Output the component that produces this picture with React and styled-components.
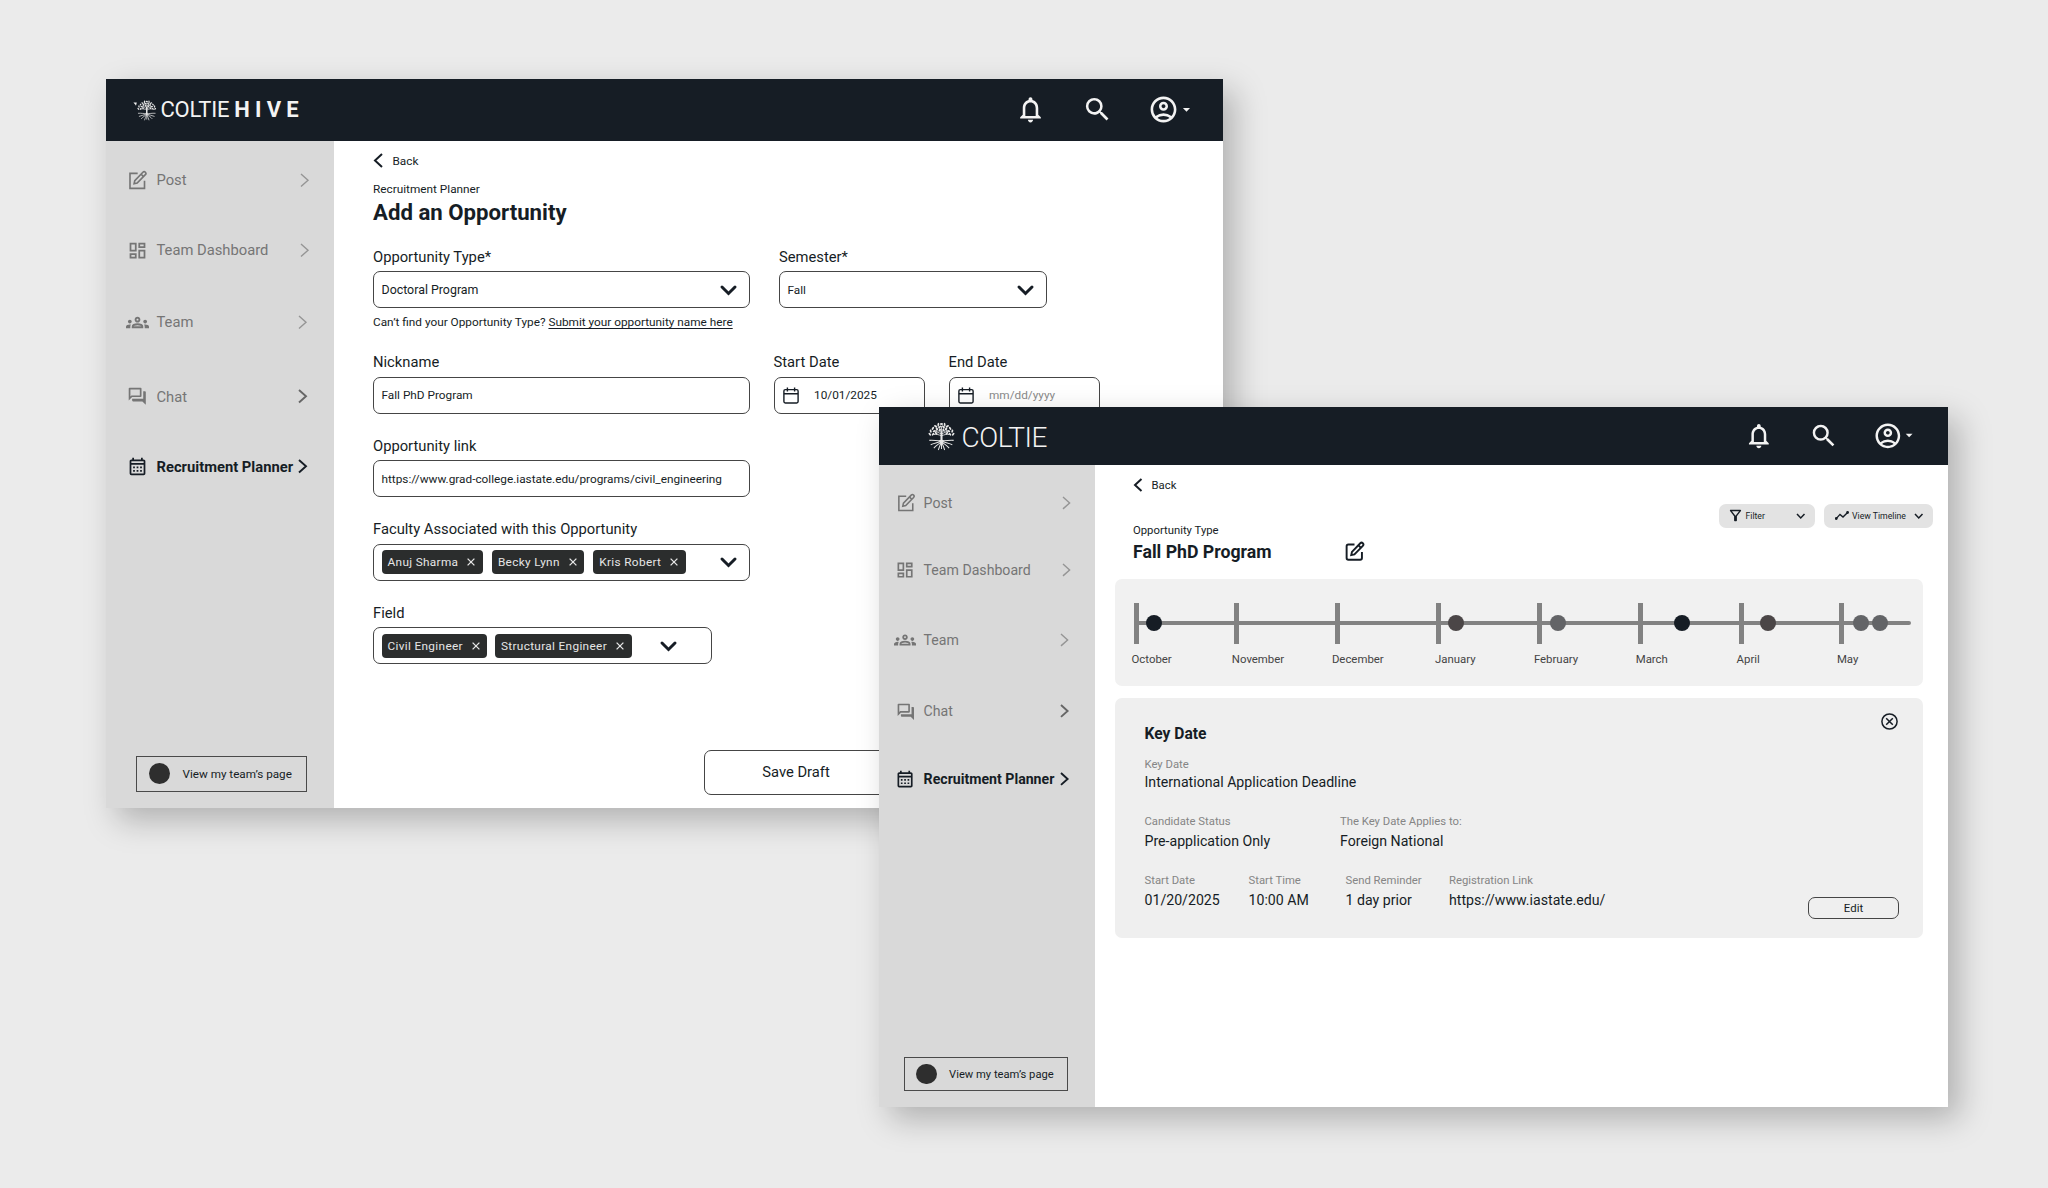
import React from "react";
import styled, { createGlobalStyle, css, ThemeProvider } from "styled-components";
import {
  MdNotificationsNone,
  MdSearch,
  MdOutlineAccountCircle,
  MdArrowDropDown,
  MdOutlineDashboard,
  MdOutlineGroups,
  MdOutlineForum,
  MdOutlineCalendarMonth,
  MdOutlineFilterAlt,
} from "react-icons/md";

// the second window is the same shell, drawn slightly smaller
const largeWindow = { scale: 1, pitch: 1, header: 62, sidebar: 228, indent: 17.5, barEnd: 28, barGap: 35.3 };
const smallWindow = { scale: 0.958, pitch: 0.9645, header: 58, sidebar: 216, indent: 13, barEnd: 30.5, barGap: 34.6 };

const size = (n) => ({ theme }) => `${n * theme.scale}px`;
const pitch = (n) => ({ theme }) => `${n * theme.pitch}px`;

const navItems = [
  { label: "Post", icon: "post", gap: 0, inset: 2 },
  { label: "Team Dashboard", icon: "dashboard", gap: 46, inset: 2 },
  { label: "Team", icon: "team", gap: 48, inset: 0 },
  { label: "Chat", icon: "chat", gap: 50.5, inset: 0, strong: true },
  { label: "Recruitment Planner", icon: "planner", gap: 46.2, inset: 0, active: true },
];

const months = [
  { name: "October", shift: -2 },
  { name: "November", shift: -2.5 },
  { name: "December", shift: -3.3 },
  { name: "January", shift: -1 },
  { name: "February", shift: -3 },
  { name: "March", shift: -2 },
  { name: "April", shift: -2 },
  { name: "May", shift: -2.5 },
];

const events = [
  { at: 20, color: "#161d25" },
  { at: 322, color: "#4b4647" },
  { at: 424, color: "#636467" },
  { at: 548.5, color: "#161d25" },
  { at: 634, color: "#4b4647" },
  { at: 727.5, color: "#636467" },
  { at: 746.5, color: "#636467" },
];

const Chevron = ({ dir = "right", w = 8, h = 14, stroke = 1.6 }) => {
  const points = {
    right: `1,1 ${w - 1},${h / 2} 1,${h - 1}`,
    left: `${w - 1},1 1,${h / 2} ${w - 1},${h - 1}`,
    down: `1,1 ${w / 2},${h - 1} ${w - 1},1`,
  };
  return (
    <svg width={w} height={h} viewBox={`0 0 ${w} ${h}`} overflow="visible">
      <polyline
        points={points[dir]}
        fill="none"
        stroke="currentColor"
        strokeWidth={stroke}
        strokeLinecap={stroke > 2.5 ? "round" : "butt"}
      />
    </svg>
  );
};

const EditIcon = ({ px = 20, stroke = 2, sharp }) => (
  <svg width={px} height={px} viewBox="0 0 24 24" fill="none" stroke="currentColor" strokeWidth={stroke}>
    <path
      d={
        sharp
          ? "M12.5 4H3.5V21.5H20.5V12.5"
          : "M12 4H5a2 2 0 0 0-2 2v13.5a2 2 0 0 0 2 2h13.5a2 2 0 0 0 2-2V12.5"
      }
    />
    <path d="M18.6 2.6a1.9 1.9 0 0 1 2.9 2.9l-9.6 9.8-3.6.8.8-3.7z" />
    <path d="M16.6 5l2.7 2.7" />
  </svg>
);

const CalendarIcon = () => (
  <svg width="16" height="17" viewBox="0 0 16 17" fill="none" stroke="currentColor" strokeWidth="1.4">
    <rect x="0.9" y="2.6" width="14.2" height="13.4" rx="1.4" />
    <path d="M0.9 6.8H15.1M4.4 0.4V4.4M11.6 0.4V4.4" />
  </svg>
);

const TrendIcon = () => (
  <svg width="14" height="9" viewBox="0 0 14 9" fill="none" stroke="currentColor" strokeWidth="1.4">
    <path d="M1.2 7.6L5 3.4L8 6L12.6 1.4" />
    <circle cx="1.3" cy="7.5" r="0.7" fill="currentColor" />
    <circle cx="12.6" cy="1.5" r="0.7" fill="currentColor" />
  </svg>
);

const CloseCircle = () => (
  <svg width="17" height="17" viewBox="0 0 17 17" fill="none" stroke="currentColor" strokeWidth="1.5">
    <circle cx="8.5" cy="8.5" r="7.6" />
    <path d="M5.2 5.2L11.8 11.8M11.8 5.2L5.2 11.8" />
  </svg>
);

const Cross = () => (
  <svg width="8" height="8" viewBox="0 0 8 8" fill="none" stroke="currentColor" strokeWidth="1.3">
    <path d="M0.6 0.6L7.4 7.4M7.4 0.6L0.6 7.4" />
  </svg>
);

const leaves = [
  [15, 2], [11.5, 2.6], [18.5, 2.6], [8.4, 4.4], [21.6, 4.4], [13.2, 5], [17, 5],
  [5.4, 6.6], [24.6, 6.6], [10, 7], [20, 7], [3, 9.4], [27, 9.4], [7, 9.4], [23, 9.4],
  [2, 12.6], [28, 12.6], [5.6, 12.6], [24.4, 12.6], [13, 8.4], [17.4, 8.6],
  [9, 11.6], [21, 11.6],
];

const Tree = ({ w, h }) => (
  <svg width={w} height={h} viewBox="0 0 30 30" preserveAspectRatio="none" fill="none" stroke="#e6e6e6">
    {leaves.map(([x, y], i) => (
      <ellipse key={i} cx={x} cy={y} rx="1.8" ry="1" fill="#e6e6e6" stroke="none" transform={`rotate(${x * 24} ${x} ${y})`} />
    ))}
    <path d="M15 21V10" strokeWidth="2.3" />
    <path
      strokeWidth="0.9"
      d="M15 14.5C12 13 10 12.5 6 13M15 14.5C18 13 20 12.5 24 13M15 12.5C12 11 9 10 7 9M15 12.5C18 11 21 10 23 9M15 11C13 8 12 6 11 4M15 11C17 8 18 6 19 4M15 11V4M10 10.5L9 6.5M20 10.5L21 6.5"
    />
    <path
      strokeWidth="1.1"
      d="M15 19C11 20 7 18.5 1.5 19M15 19C19 20 23 18.5 28.5 19M14.6 20C11 21.5 7 22 3 23.5M15.4 20C19 21.5 23 22 27 23.5M14.6 20.5C12 23 9 24 6.5 27M15.4 20.5C18 23 21 24 23.5 27M14.7 21C13.5 24 12.5 26 11.5 29M15.3 21C16.5 24 17.5 26 18.5 29M15 20V28"
    />
  </svg>
);

// stray leaf beside the small tree
const Leaf = () => (
  <svg width="4" height="21" viewBox="0 0 4 21">
    <path d="M0.4 2.6H3.8L3 5.8L2.2 4.6Z" fill="#f0f0f0" />
  </svg>
);

const navIcon = (name, scale) => {
  switch (name) {
    case "post":
      return <EditIcon px={20.5 * scale} stroke={1.9} sharp />;
    case "dashboard":
      return <MdOutlineDashboard size={21 * scale} />;
    case "team":
      return <MdOutlineGroups size={23 * scale} />;
    case "chat":
      return <MdOutlineForum size={20.5 * scale} />;
    default:
      return <MdOutlineCalendarMonth size={21 * scale} />;
  }
};

const TopBar = ({ brand, theme }) => (
  <Header>
    {brand}
    <HeaderActions>
      <MdNotificationsNone size={31 * theme.scale} />
      <MdSearch size={31 * theme.scale} />
      <Account>
        <MdOutlineAccountCircle size={31 * theme.scale} />
        <MdArrowDropDown size={17 * theme.scale} />
      </Account>
    </HeaderActions>
  </Header>
);

const SideNav = ({ theme }) => (
  <Sidebar>
    <nav>
      {navItems.map((item) => (
        <NavItem key={item.label} $gap={item.gap} $active={item.active}>
          <NavIcon>{navIcon(item.icon, theme.scale)}</NavIcon>
          <NavLabel>{item.label}</NavLabel>
          <NavArrow $inset={item.inset} $strong={item.strong} $active={item.active}>
            <Chevron w={9 * theme.scale} h={14.5 * theme.scale} stroke={item.active || item.strong ? 1.9 : 1.4} />
          </NavArrow>
        </NavItem>
      ))}
    </nav>
    <TeamButton>
      <Avatar />
      View my team’s page
    </TeamButton>
  </Sidebar>
);

const Select = ({ label, width, value, textSize, children, arrow = 13, chipGap, note }) => (
  <Field $width={width}>
    <Label>{label}</Label>
    <Control $arrow={arrow} $size={textSize}>
      {children ? <Chips $gap={chipGap}>{children}</Chips> : value}
      <Chevron dir="down" w={15} h={8.5} stroke={3} />
    </Control>
    {note}
  </Field>
);

const Tag = ({ children }) => (
  <Chip>
    {children}
    <Cross />
  </Chip>
);

const DateField = ({ label, value, empty }) => (
  <Field $width={151}>
    <Label>{label}</Label>
    <DateControl $empty={empty}>
      <CalendarIcon />
      <span>{value}</span>
    </DateControl>
  </Field>
);

const OpportunityForm = () => (
  <ThemeProvider theme={largeWindow}>
    <Window $x={106} $y={79} $w={1116.5} $h={729}>
      <TopBar
        theme={largeWindow}
        brand={
          <Brand $left={27}>
            <Leaf />
            <Tree w={19.5} h={21} />
            <BrandName>COLTIE</BrandName>
            <BrandBold>HIVE</BrandBold>
          </Brand>
        }
      />
      <Body>
        <SideNav theme={largeWindow} />
        <FormMain>
          <Back>
            <Chevron dir="left" w={9} h={15} stroke={2} />
            Back
          </Back>
          <Eyebrow>Recruitment Planner</Eyebrow>
          <Title>Add an Opportunity</Title>
          <FieldRow $gap={29.5}>
            <Select
              label="Opportunity Type*"
              width={376.5}
              value="Doctoral Program"
              textSize={12.4}
              note={
                <Note>
                  Can’t find your Opportunity Type? <u>Submit your opportunity name here</u>
                </Note>
              }
            />
            <Select label="Semester*" width={268} value="Fall" />
          </FieldRow>
          <FieldRow $gap={24}>
            <Field $width={376.5}>
              <Label>Nickname</Label>
              <Control>Fall PhD Program</Control>
            </Field>
            <DateField label="Start Date" value="10/01/2025" />
            <DateField label="End Date" value="mm/dd/yyyy" empty />
          </FieldRow>
          <FieldRow>
            <Field $width={376.5}>
              <Label>Opportunity link</Label>
              <Control>https://www.grad-college.iastate.edu/programs/civil_engineering</Control>
            </Field>
          </FieldRow>
          <FieldRow>
            <Select label="Faculty Associated with this Opportunity" width={376.5} chipGap={9}>
              <Tag>Anuj Sharma</Tag>
              <Tag>Becky Lynn</Tag>
              <Tag>Kris Robert</Tag>
            </Select>
          </FieldRow>
          <FieldRow>
            <Select label="Field" width={339} arrow={35.5} chipGap={7.5}>
              <Tag>Civil Engineer</Tag>
              <Tag>Structural Engineer</Tag>
            </Select>
          </FieldRow>
          <DraftButton>Save Draft</DraftButton>
        </FormMain>
      </Body>
    </Window>
  </ThemeProvider>
);

const Detail = ({ label, value, width }) => (
  <DetailCell $width={width}>
    <DetailLabel>{label}</DetailLabel>
    <DetailValue>{value}</DetailValue>
  </DetailCell>
);

const ProgramTimeline = () => (
  <ThemeProvider theme={smallWindow}>
    <Window $x={879} $y={407} $w={1069} $h={700}>
      <TopBar
        theme={smallWindow}
        brand={
          <Brand $left={49}>
            <Tree w={27} h={29} />
            <BrandName $large>COLTIE</BrandName>
          </Brand>
        }
      />
      <Body>
        <SideNav theme={smallWindow} />
        <TimelineMain>
          <Intro>
            <div>
              <Back>
                <Chevron dir="left" w={8.5} h={14} stroke={2} />
                Back
              </Back>
              <Eyebrow $spaced>Opportunity Type</Eyebrow>
              <ProgramTitle>
                <Title $small>Fall PhD Program</Title>
                <EditIcon px={21} stroke={2.2} />
              </ProgramTitle>
            </div>
            <Pills>
              <Pill $width={96}>
                <MdOutlineFilterAlt size={17} />
                <span>Filter</span>
                <Chevron dir="down" w={9.5} h={6} stroke={1.5} />
              </Pill>
              <Pill $width={109}>
                <TrendIcon />
                <span>View Timeline</span>
                <Chevron dir="down" w={9.5} h={6} stroke={1.5} />
              </Pill>
            </Pills>
          </Intro>
          <TimelineCard>
            <Track>
              {months.map((month) => (
                <Month key={month.name}>
                  <Tick />
                  <MonthName $shift={month.shift}>{month.name}</MonthName>
                </Month>
              ))}
              <Rail />
              {events.map((event) => (
                <Dot key={event.at} style={{ left: event.at }} $color={event.color} />
              ))}
            </Track>
          </TimelineCard>
          <DateCard>
            <DateCardTop>
              <CardTitle>Key Date</CardTitle>
              <CloseCircle />
            </DateCardTop>
            <Details $top={14}>
              <Detail label="Key Date" value="International Application Deadline" />
            </Details>
            <Details $top={23} $gap={2.5}>
              <Detail label="Candidate Status" value="Pre-application Only" width={195.5} />
              <Detail label="The Key Date Applies to:" value="Foreign National" />
            </Details>
            <Details $top={23.5} $gap={2.5}>
              <Detail label="Start Date" value="01/20/2025" width={104} />
              <Detail label="Start Time" value="10:00 AM" width={97} />
              <Detail label="Send Reminder" value="1 day prior" width={103.5} />
              <Detail label="Registration Link" value="https://www.iastate.edu/" />
              <EditButton>Edit</EditButton>
            </Details>
          </DateCard>
        </TimelineMain>
      </Body>
    </Window>
  </ThemeProvider>
);

const App = () => (
  <Canvas>
    <GlobalStyle />
    <OpportunityForm />
    <ProgramTimeline />
  </Canvas>
);

const GlobalStyle = createGlobalStyle`
  * {
    box-sizing: border-box;
  }

  body {
    margin: 0;
    background-color: #ebebeb;
    font-family: Roboto, "Liberation Sans", sans-serif;
    color: #161d25;
  }

  svg {
    display: block;
    flex-shrink: 0;
  }
`;

const Canvas = styled.div`
  position: relative;
  width: 2048px;
  height: 1188px;
  overflow: hidden;
`;

const Window = styled.section`
  position: absolute;
  left: ${({ $x }) => $x}px;
  top: ${({ $y }) => $y}px;
  width: ${({ $w }) => $w}px;
  height: ${({ $h }) => $h}px;
  display: flex;
  flex-direction: column;
  background-color: #fff;
  box-shadow: 11px 12px 30px rgba(0, 0, 0, 0.25);
`;

const Header = styled.header`
  display: flex;
  justify-content: space-between;
  align-items: center;
  flex-shrink: 0;
  height: ${({ theme }) => theme.header}px;
  padding-right: ${({ theme }) => theme.barEnd}px;
  background-color: #161d25;
  color: #f3f3f3;
`;

const HeaderActions = styled.div`
  display: flex;
  align-items: center;
  gap: ${({ theme }) => theme.barGap}px;
  padding-bottom: 1px;
`;

const Account = styled.div`
  display: flex;
  align-items: center;

  svg + svg {
    margin-left: ${size(-1.5)};
  }
`;

const Brand = styled.div`
  display: flex;
  align-items: center;
  padding-left: ${({ $left }) => $left}px;
`;

const BrandName = styled.span`
  padding-top: ${({ $large }) => ($large ? 3 : 0)}px;
  padding-left: ${({ $large }) => ($large ? 6.5 : 4)}px;
  font-size: ${({ $large }) => ($large ? 28 : 22)}px;
  font-weight: ${({ $large }) => ($large ? 300 : 400)};
  letter-spacing: ${({ $large }) => ($large ? -0.45 : -0.2)}px;
  line-height: 1;
`;

const BrandBold = styled.span`
  padding-left: 5px;
  font-size: 22px;
  font-weight: 700;
  letter-spacing: 5.2px;
  line-height: 1;
`;

const Body = styled.div`
  display: flex;
  flex: 1;
  min-height: 0;
`;

const Sidebar = styled.aside`
  display: flex;
  flex-direction: column;
  justify-content: space-between;
  flex-shrink: 0;
  width: ${({ theme }) => theme.sidebar}px;
  padding: ${pitch(27)} 0 ${pitch(16.5)};
  background-color: #d9d9d9;
`;

const NavItem = styled.a`
  display: flex;
  align-items: center;
  height: ${pitch(24)};
  margin-top: ${({ $gap, theme }) => $gap * theme.pitch}px;
  padding-left: ${({ theme }) => theme.indent}px;
  padding-right: ${size(25)};
  font-size: ${size(14.75)};
  color: #757575;

  ${({ $active }) =>
    $active &&
    css`
      color: #161d25;
      font-weight: 700;
    `}
`;

const NavIcon = styled.span`
  display: flex;
  justify-content: center;
  width: ${size(28)};
  margin-right: ${size(5)};
`;

const NavLabel = styled.span`
  flex: 1;
  white-space: nowrap;
`;

const NavArrow = styled.span`
  margin-right: ${({ $inset }) => ($inset ? 0 : 2)}px;
  color: ${({ $strong, $active }) => ($active ? "#161d25" : $strong ? "#666" : "#959595")};
`;

const TeamButton = styled.button`
  display: flex;
  align-items: center;
  gap: ${size(13)};
  width: ${size(171)};
  height: ${size(35.5)};
  margin-left: ${({ theme }) => theme.indent + 12}px;
  padding: 0 0 0 ${size(12)};
  border: 1px solid #4a4a4a;
  background: none;
  color: #161d25;
  font-family: inherit;
  font-size: ${size(11.7)};
  white-space: nowrap;
`;

const Avatar = styled.span`
  width: ${size(21)};
  height: ${size(21)};
  border-radius: 50%;
  background-color: #2e2e2e;
`;

const FormMain = styled.main`
  flex: 1;
  min-width: 0;
  padding: 10.5px 0 0 39px;
`;

const Back = styled.div`
  display: flex;
  align-items: center;
  gap: ${size(9.5)};
  height: ${size(18)};
  padding-left: ${size(1)};
  font-size: ${size(11.8)};
`;

const Eyebrow = styled.div`
  margin-top: ${({ $spaced }) => ($spaced ? 29.5 : 11.8)}px;
  font-size: ${size(11.8)};
  line-height: 16px;
`;

const Title = styled.h1`
  margin: 0;
  padding-top: ${({ $small }) => ($small ? 2 : 1)}px;
  font-size: ${({ $small }) => ($small ? 17.7 : 22.2)}px;
  line-height: ${({ $small }) => ($small ? 22 : 28)}px;
  font-weight: 700;
`;

const FieldRow = styled.div`
  display: flex;
  gap: ${({ $gap }) => $gap || 0}px;
  margin-top: 22px;

  ${Title} + & {
    margin-top: 20.5px;
  }
`;

const Field = styled.div`
  width: ${({ $width }) => $width}px;
`;

const Label = styled.div`
  margin-bottom: 4.5px;
  font-size: 14.75px;
  line-height: 20px;
  white-space: nowrap;
`;

const Control = styled.div`
  display: flex;
  justify-content: space-between;
  align-items: center;
  height: 37px;
  padding: 0 ${({ $arrow }) => $arrow ?? 8}px 0 7.5px;
  border: 1px solid #454545;
  border-radius: 7px;
  font-size: ${({ $size }) => $size || 11.8}px;
  white-space: nowrap;
`;

const DateControl = styled(Control)`
  justify-content: flex-start;
  gap: 15px;
  padding-left: 8.5px;

  span {
    color: ${({ $empty }) => ($empty ? "#8a8a8a" : "#161d25")};
  }
`;

const Note = styled.div`
  margin-top: 6px;
  font-size: 11.8px;
  line-height: 16px;
  white-space: nowrap;

  u {
    text-underline-offset: 2px;
  }
`;

const Chips = styled.div`
  display: flex;
  gap: ${({ $gap }) => $gap}px;
`;

const Chip = styled.span`
  display: flex;
  align-items: center;
  gap: 9px;
  height: 24px;
  padding: 0 7.5px 0 6px;
  border-radius: 4px;
  background-color: #2b2d2d;
  color: #e6e6e6;
  font-size: 11.8px;
  letter-spacing: 0.34px;
`;

const outlineButton = css`
  border: 1px solid #454545;
  background: none;
  color: #161d25;
  font-family: inherit;
`;

const DraftButton = styled.button`
  ${outlineButton}
  width: 184px;
  height: 45px;
  margin: 85.5px 0 0 331px;
  border-radius: 7px;
  font-size: 14.75px;
`;

const TimelineMain = styled.main`
  flex: 1;
  min-width: 0;
  padding: 11.5px 25px 0 20px;
`;

const Intro = styled.div`
  display: flex;
  justify-content: space-between;
  margin-right: -10px;
  padding-left: 18px;
`;

const ProgramTitle = styled.div`
  display: flex;
  align-items: center;
  gap: 72px;
`;

const Pills = styled.div`
  display: flex;
  gap: 9px;
  padding-top: 27px;
`;

const Pill = styled.button`
  display: flex;
  align-items: center;
  width: ${({ $width }) => $width}px;
  height: 24px;
  padding: 0 10px 0 ${({ $width }) => ($width > 100 ? 11 : 8)}px;
  border: none;
  border-radius: 7px;
  background-color: #e3e3e3;
  color: #161d25;
  font-family: inherit;
  font-size: 8.7px;

  span {
    flex: 1;
    padding-left: ${({ $width }) => ($width > 100 ? 3 : 1.5)}px;
    text-align: left;
    white-space: nowrap;
  }
`;

const TimelineCard = styled.div`
  height: 107px;
  margin-top: 16px;
  padding: 24px 12px 0 18.5px;
  border-radius: 7px;
  background-color: #f1f1f1;
`;

const Track = styled.div`
  position: relative;
  display: flex;
`;

const Month = styled.div`
  flex: 0 0 100.85px;
`;

const Tick = styled.div`
  width: 5px;
  height: 41px;
  background-color: #828282;
`;

const MonthName = styled.div`
  margin: 7px 0 0 ${({ $shift }) => $shift}px;
  color: #444;
  font-size: 11.4px;
  line-height: 16px;
`;

// line running across all month ticks
const Rail = styled.div`
  position: absolute;
  top: 18px;
  left: 0;
  width: 777.5px;
  height: 4px;
  border-radius: 0 2px 2px 0;
  background-color: #828282;
`;

const Dot = styled.span`
  position: absolute;
  top: 12px;
  width: 16px;
  height: 16px;
  margin-left: -8px;
  border-radius: 50%;
  background-color: ${({ $color }) => $color};
`;

const DateCard = styled.div`
  height: 240px;
  margin-top: 12px;
  padding: 15px 24px 0 29.5px;
  border-radius: 7px;
  background-color: #efefef;
`;

const DateCardTop = styled.div`
  display: flex;
  justify-content: space-between;
  height: 30px;
  padding-right: 1px;
`;

const CardTitle = styled.h2`
  margin: 0;
  padding-top: 10.5px;
  font-size: 15.6px;
  line-height: 20px;
  font-weight: 700;
`;

const Details = styled.div`
  display: flex;
  margin-top: ${({ $top }) => $top}px;

  & > div > div + div {
    margin-top: ${({ $gap }) => $gap || 1}px;
  }
`;

const DetailCell = styled.div`
  width: ${({ $width }) => ($width ? `${$width}px` : "auto")};
`;

const DetailLabel = styled.div`
  color: #858585;
  font-size: 11.3px;
  line-height: 15px;
  white-space: nowrap;
`;

const DetailValue = styled.div`
  font-size: 14.15px;
  line-height: 18px;
  white-space: nowrap;
`;

const EditButton = styled.button`
  ${outlineButton}
  width: 91px;
  height: 22px;
  margin: 24px 0 0 auto;
  padding: 0;
  border-radius: 7px;
  font-size: 11.4px;
`;

export default App;
